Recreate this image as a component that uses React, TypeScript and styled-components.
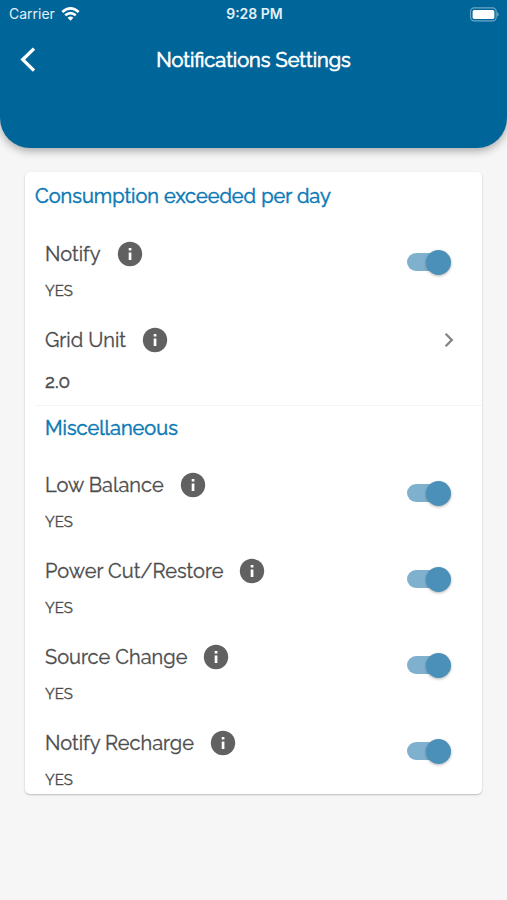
import React, { useId, useState } from "react";
import styled, { createGlobalStyle } from "styled-components";

const GlobalStyle = createGlobalStyle`
  * { box-sizing: border-box; }
  body {
    margin: 0;
    background: #f6f6f6;
    color: #4c4c4c;
    font-family: Raleway, Lato, sans-serif;
  }
  button { font: inherit; color: inherit; background: none; border: 0; padding: 0; cursor: pointer; }
  h1, h2, p { margin: 0; }
`;

const Header = styled.header`
  height: 148px;
  background: #006699;
  color: #fff;
  border-radius: 0 0 30px 30px;
  box-shadow: 0 3px 8px rgba(0, 0, 0, 0.32);
`;

const StatusBar = styled.div`
  display: grid;
  grid-template-columns: 1fr auto 1fr;
  align-items: center;
  height: 28px;
  padding: 0 7px 0 9px;
  font-family: Inter, sans-serif;
  font-size: 14px;
  line-height: 20px;
  color: #e4f0f8;
`;

const Carrier = styled.div`
  display: flex;
  align-items: center;
  gap: 6px;
`;

const Clock = styled.time`
  font-weight: 600;
`;

const Battery = styled.svg`
  justify-self: end;
`;

const NavBar = styled.div`
  display: grid;
  grid-template-columns: 56px 1fr 56px;
  align-items: center;
  height: 64px;
`;

const BackButton = styled.button`
  display: flex;
  align-items: center;
  height: 44px;
  padding-left: 20px;
`;

const PageTitle = styled.h1`
  text-align: center;
  font-size: 20px;
  line-height: 24px;
  font-weight: 400;
  -webkit-text-stroke: 0.7px currentColor;
`;

const Card = styled.main`
  margin: 24px 25px;
  background: #fff;
  border-radius: 5px;
  box-shadow: 0 1px 2px rgba(0, 0, 0, 0.24);
`;

const Section = styled.section`
  & + & {
    margin-left: 10px;
    border-top: 1px solid #f4f4f4;
  }
`;

const SectionTitle = styled.h2<{ $compact?: boolean }>`
  padding: ${(p) => (p.$compact ? "10px 10px" : "12px 10px 11px")};
  font-size: 20px;
  line-height: 24px;
  font-weight: 400;
  color: #0878b4;
  -webkit-text-stroke: 0.5px currentColor;
`;

const Row = styled.div<{ $inset?: boolean; $link?: boolean }>`
  display: flex;
  align-items: ${(p) => (p.$link ? "flex-start" : "center")};
  justify-content: space-between;
  padding: 22px 26px ${(p) => (p.$link ? 14 : 4)}px ${(p) => (p.$inset ? 10 : 20)}px;
`;

const RowText = styled.div<{ $gap: number }>`
  display: flex;
  flex-direction: column;
  gap: ${(p) => p.$gap}px;
`;

const LabelLine = styled.div`
  display: flex;
  align-items: center;
  gap: 16px;
  height: 26px;
`;

const Label = styled.label`
  font-size: 20px;
  line-height: 26px;
  -webkit-text-stroke: 0.3px currentColor;
`;

const InfoButton = styled.button`
  display: flex;
`;

const Value = styled.p<{ $large?: boolean }>`
  font-size: ${(p) => (p.$large ? 19 : 15)}px;
  line-height: 20px;
  -webkit-text-stroke: ${(p) => (p.$large ? "0.5px" : "0.3px")} currentColor;
`;

const SwitchArea = styled.div`
  display: flex;
  align-items: center;
  height: 26px;
  margin: 4px 5px 22px 0;
`;

const Switch = styled.input`
  appearance: none;
  display: flex;
  align-items: center;
  width: 44px;
  height: 26px;
  margin: 0;
  cursor: pointer;

  &::before {
    content: "";
    flex: 0 0 40px;
    height: 18px;
    border-radius: 9px;
    background: #bdbdbd;
  }
  &::after {
    content: "";
    flex: 0 0 25px;
    height: 25px;
    margin-left: -40px;
    border-radius: 50%;
    background: #fafafa;
    box-shadow: 0 1px 3px rgba(0, 0, 0, 0.3);
  }
  &:checked::before { background: #7fb1ce; }
  &:checked::after { margin-left: -21px; background: #4a90b9; }
`;

const ChevronButton = styled.button`
  display: flex;
  align-items: center;
  justify-content: flex-end;
  width: 26px;
  height: 26px;
`;

function InfoIcon() {
  return (
    <svg width="26" height="26" viewBox="0 0 26 26" aria-hidden="true">
      <circle cx="13" cy="13" r="12.2" fill="#616161" />
      <path d="M11.7 7h2.7v2.5h-2.7zM11.7 11.4h2.7v7.5h-2.7z" fill="#fff" />
    </svg>
  );
}

function WifiIcon() {
  return (
    <svg width="19" height="15" viewBox="0 0 19 15" fill="none" stroke="#fff" strokeWidth="2.6" aria-hidden="true">
      <path d="M1.3 5Q9.5-2.2 17.7 5M4.2 8.3Q9.5 3.8 14.8 8.3" />
      <path d="M6.6 10.8Q9.5 8.3 12.4 10.8L9.5 13.8z" fill="#fff" stroke="none" />
    </svg>
  );
}

interface SettingProps {
  label: string;
  inset?: boolean;
}

function ToggleSetting({ label, inset }: SettingProps) {
  const id = useId();
  const [on, setOn] = useState(true);
  return (
    <Row $inset={inset}>
      <RowText $gap={14}>
        <LabelLine>
          <Label htmlFor={id}>{label}</Label>
          <InfoButton type="button" aria-label={`About ${label}`}><InfoIcon /></InfoButton>
        </LabelLine>
        <Value>{on ? "YES" : "NO"}</Value>
      </RowText>
      <SwitchArea>
        <Switch id={id} type="checkbox" role="switch" checked={on} onChange={(e) => setOn(e.target.checked)} />
      </SwitchArea>
    </Row>
  );
}

export default function App() {
  return (
    <>
      <GlobalStyle />
      <Header>
        <StatusBar>
          <Carrier>Carrier <WifiIcon /></Carrier>
          <Clock>9:28 PM</Clock>
          <Battery width="30" height="15" viewBox="0 0 30 15" aria-hidden="true">
            <rect x="0.6" y="0.9" width="25.6" height="13" rx="3.6" fill="none" stroke="#6fa8c8" strokeWidth="1.1" />
            <rect x="2.6" y="2.9" width="21.8" height="9" rx="1.6" fill="#fff" />
            <path d="M27.4 5.1q2.6 2.3 0 4.6z" fill="#8bb9d2" />
          </Battery>
        </StatusBar>
        <NavBar>
          <BackButton type="button" aria-label="Back">
            <svg width="16" height="26" viewBox="0 0 16 26" fill="none" stroke="#fff" strokeWidth="3.4" aria-hidden="true">
              <path d="M14 1.6L2.8 12.6L14 23.6" />
            </svg>
          </BackButton>
          <PageTitle>Notifications Settings</PageTitle>
        </NavBar>
      </Header>
      <Card>
        <Section>
          <SectionTitle>Consumption exceeded per day</SectionTitle>
          <ToggleSetting label="Notify" />
          <Row $link>
            <RowText $gap={18}>
              <LabelLine>
                <Label htmlFor="grid-unit">Grid Unit</Label>
                <InfoButton type="button" aria-label="About Grid Unit"><InfoIcon /></InfoButton>
              </LabelLine>
              <Value $large>2.0</Value>
            </RowText>
            <ChevronButton id="grid-unit" type="button">
              <svg width="12" height="16" viewBox="0 0 12 16" fill="none" stroke="#858585" strokeWidth="2.3" aria-hidden="true">
                <path d="M1.6 1.8L7.8 8L1.6 14.2" />
              </svg>
            </ChevronButton>
          </Row>
        </Section>
        <Section>
          <SectionTitle $compact>Miscellaneous</SectionTitle>
          <ToggleSetting label="Low Balance" inset />
          <ToggleSetting label="Power Cut/Restore" inset />
          <ToggleSetting label="Source Change" inset />
          <ToggleSetting label="Notify Recharge" inset />
        </Section>
      </Card>
    </>
  );
}
